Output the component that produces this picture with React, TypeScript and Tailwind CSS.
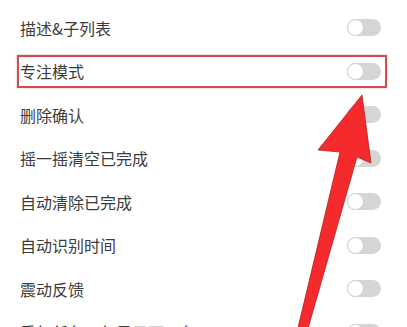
import React from "react";

const rows = [
  "描述&子列表",
  "专注模式",
  "删除确认",
  "摇一摇清空已完成",
  "自动清除已完成",
  "自动识别时间",
  "震动反馈",
  "重复任务，仅显示下一条",
];

function Toggle() {
  return (
    <div className="relative w-[34px] h-[17px] rounded-full bg-[#d5d5d5] shrink-0">
      <div className="absolute left-0 top-0 w-[17px] h-[17px] rounded-full bg-white border-[1.5px] border-[#cfcfcf]" />
    </div>
  );
}

export default function App() {
  return (
    <div
      className="relative w-full h-[327px] overflow-hidden bg-white"
      style={{ fontFamily: '"Noto Sans CJK SC", "Noto Sans", sans-serif' }}
    >
      <div className="flex flex-col pt-[6px]">
        {rows.map((r) => (
          <div
            key={r}
            className="flex items-center justify-between h-[43.5px] shrink-0 pl-[20px] pr-[26px]"
          >
            <span className="text-[16px] leading-none text-[#3c3c3c]">{r}</span>
            <Toggle />
          </div>
        ))}
      </div>
      <div className="absolute left-[17px] top-[55px] w-[370px] h-[33px] border-2 border-[#d9484b] shadow-[0_0_2px_rgba(0,0,0,0.25)]" />
      <svg
        className="absolute left-0 top-0"
        width="407"
        height="327"
        viewBox="0 0 407 327"
      >
        <polygon
          points="362,95 371,163 357,157 307,332 297,332 340,152 318,150"
          fill="#f42a2c"
          stroke="#b22022"
          strokeWidth="0.8"
          strokeLinejoin="round"
        />
      </svg>
    </div>
  );
}
